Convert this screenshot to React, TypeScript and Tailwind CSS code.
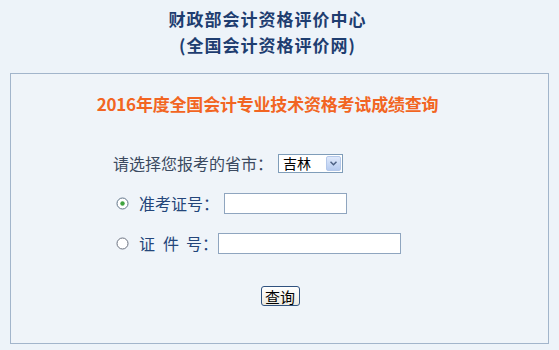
import React from "react";

function Radio({ checked }: { checked?: boolean }) {
  return (
    <svg width="13" height="13" viewBox="0 0 13 13" className="shrink-0">
      <circle cx="6.5" cy="6.5" r="5.5" fill="#ffffff" stroke={checked ? "#5f7387" : "#6b7280"} strokeWidth="1" />
      {checked && <circle cx="6.5" cy="6.5" r="2.2" fill="#3fa33f" />}
    </svg>
  );
}

export default function App() {
  const font = { fontFamily: '"Noto Sans CJK SC", "Noto Sans", sans-serif' };

  return (
    <div className="min-h-[350px] w-[559px] bg-[#edf3f9] pt-[6px]" style={font}>
      {/* header */}
      <div className="pr-[24px] text-center text-[17px] font-bold leading-[26px] tracking-[1px] text-[#1e3d70]">
        <div>财政部会计资格评价中心</div>
        <div>(全国会计资格评价网)</div>
      </div>

      {/* query box */}
      <div className="mx-[10px] mt-[15px] h-[271px] border border-[#a2b5cb] bg-[#eff4f9]">
        <div className="pr-[24px] pt-[18px] text-center text-[17px] font-bold leading-[24px] tracking-[-0.2px] text-[#f26522]">
          2016年度全国会计专业技术资格考试成绩查询
        </div>

        <div className="mt-[35px] pl-[102px] text-[16px]">
          {/* province */}
          <div className="flex h-[24px] items-center">
            <span className="w-[165px] text-[#3b4a60]">请选择您报考的省市：</span>
            <div className="flex h-[19px] w-[65px] items-center justify-between border border-[#7f9db9] bg-white pl-[4px] pr-[1px]">
              <span className="text-[14px] leading-none text-black">吉林</span>
              <div className="flex h-[15px] w-[15px] items-center justify-center rounded-[2px] border border-[#b4c8ea] bg-gradient-to-b from-[#dfe9fb] to-[#b6cbf0]">
                <svg width="7" height="5" viewBox="0 0 7 5">
                  <path d="M0.5 0.8 L3.5 3.8 L6.5 0.8" fill="none" stroke="#4d6185" strokeWidth="1.5" />
                </svg>
              </div>
            </div>
          </div>

          {/* admission ticket number */}
          <div className="mt-[16px] flex h-[24px] items-center">
            <div className="ml-[3px] w-[23px]">
              <Radio checked />
            </div>
            <span className="w-[85px] text-[#24467a]">准考证号：</span>
            <input type="text" className="h-[21px] w-[123px] border border-[#8fa5bf] bg-white outline-none" />
          </div>

          {/* id number */}
          <div className="mt-[16px] flex h-[24px] items-center">
            <div className="ml-[3px] w-[23px]">
              <Radio />
            </div>
            <span className="flex w-[79px] text-[#24467a]">
              <span className="w-[28px]">证</span>
              <span className="w-[27px]">件</span>
              <span>号：</span>
            </span>
            <input type="text" className="h-[21px] w-[183px] border border-[#8fa5bf] bg-white outline-none" />
          </div>
        </div>

        <div className="mt-[29px] flex h-[24px] items-center justify-center">
          <button className="ml-[1px] h-[20px] w-[39px] rounded-[3px] border border-[#30527f] bg-gradient-to-b from-[#ffffff] to-[#ece9e0] text-[15px] leading-none text-black">
            查询
          </button>
        </div>
      </div>
    </div>
  );
}
